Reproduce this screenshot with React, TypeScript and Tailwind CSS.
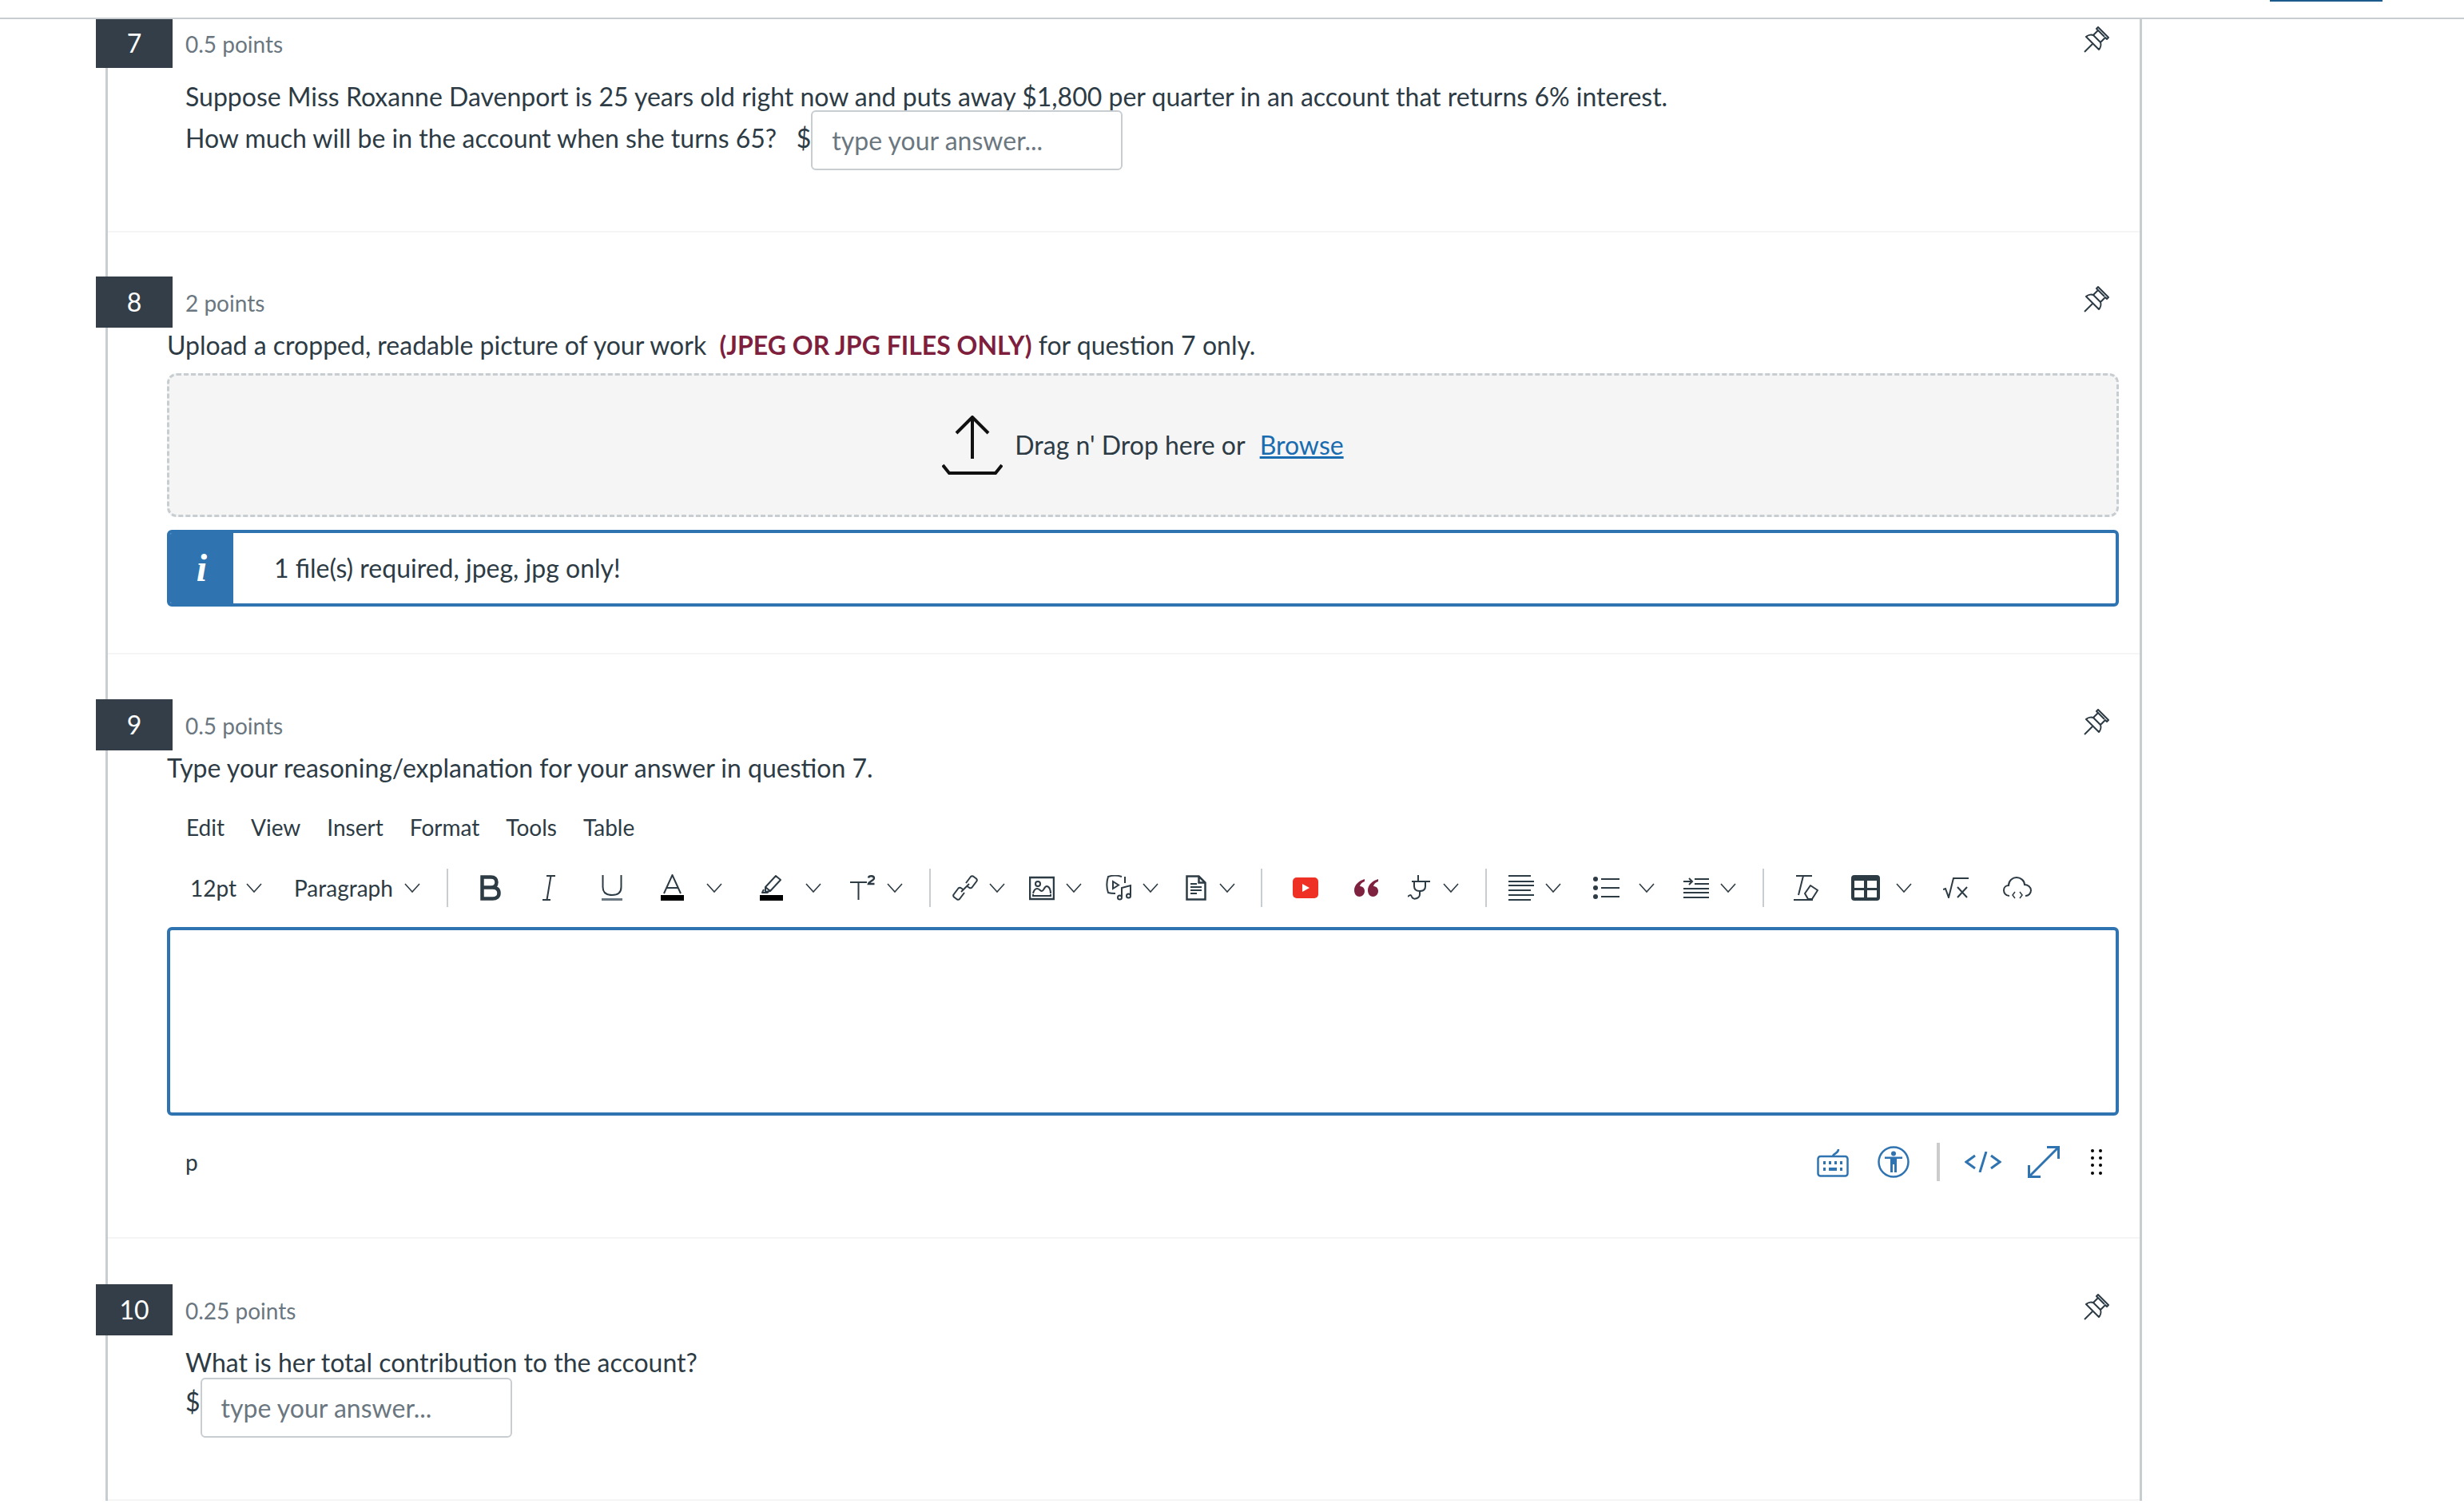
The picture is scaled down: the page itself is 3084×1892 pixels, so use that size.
const ink = "#2d3b45";
const blue = "#2f74b0";

function Chev({ className }: { className: string }) {
  return (
    <svg viewBox="0 0 20 12" className={`h-[12px] w-[20px] shrink-0 ${className}`} fill="none" stroke={ink} strokeWidth="1.6">
      <path d="M1 1l9 10 9-10" />
    </svg>
  );
}

function Sep({ className }: { className: string }) {
  return <div className={`h-[48px] w-[2px] shrink-0 bg-[#c7cdd1] ${className}`} />;
}

function Pin() {
  return (
    <svg viewBox="0 0 32 33" className="h-[33px] w-[32px]" fill="none" stroke={ink} strokeWidth="2" strokeLinejoin="round">
      <path d="M1 32l10-10" />
      <path d="M3 13c2-2 6-3 9-2l6-6-2-2 2-2 13 13-2 2-2-2-6 6c1 3 0 7-2 9z" />
      <path d="M12 11l9 9M18 5l8 8" />
    </svg>
  );
}

function QHead({ n, pts, clipped }: { n: string; pts: string; clipped?: boolean }) {
  return (
    <div className={clipped ? "flex h-[61px] items-start" : "flex h-[64px] items-start"}>
      <div className={clipped ? "-ml-[15px] flex h-[61px] w-[96px] shrink-0 items-center justify-center bg-[#333e48] pb-[2px] text-[32px] text-white" : "-ml-[15px] flex h-[64px] w-[96px] shrink-0 items-center justify-center bg-[#333e48] text-[32px] text-white"}>
        {n}
      </div>
      <div className={clipped ? "ml-[16px] flex h-[61px] items-center text-[28px] text-[#6b7780]" : "ml-[16px] flex h-[66px] items-center text-[28px] text-[#6b7780]"}>
        {pts}
      </div>
      <div className={clipped ? "ml-auto mr-[38px] mt-[9px]" : "ml-auto mr-[38px] mt-[12px]"}>
        <Pin />
      </div>
    </div>
  );
}

function Answer({ className }: { className: string }) {
  return (
    <div className={`flex h-[75px] w-[390px] shrink-0 items-center rounded-[6px] border-2 border-[#c7cdd1] bg-white pl-[24px] text-[32px] text-[#6b7780] ${className}`}>
      type your answer...
    </div>
  );
}

function Toolbar() {
  return (
    <div className="flex h-[99px] items-center text-[28px]">
      <span className="ml-[103px] w-[55px] shrink-0 whitespace-nowrap">12pt</span>
      <Chev className="ml-[15px]" />
      <span className="ml-[40px] w-[124px] shrink-0 whitespace-nowrap">Paragraph</span>
      <Chev className="ml-[14px]" />
      <Sep className="ml-[33px]" />

      <svg viewBox="0 0 26 32" className="ml-[40px] h-[32px] w-[26px] shrink-0" fill="none" stroke={ink} strokeWidth="4.5">
        <path d="M2.5 2.5h11c4.500 0 7 2.500 7 6.500s-2.500 6.500-7 6.500h-11zM2.500 15.500h13c5 0 8 2.500 8 7s-3 7-8 7h-13z" />
      </svg>
      <svg viewBox="0 0 16 32" className="ml-[52px] h-[32px] w-[16px] shrink-0" fill="none" stroke={ink} strokeWidth="2">
        <path d="M5 1h11M0 31h10M10.500 1L5.500 31" />
      </svg>
      <svg viewBox="0 0 26 32" className="ml-[58px] h-[32px] w-[26px] shrink-0" fill="none" stroke={ink} strokeWidth="2">
        <path d="M1.500 0v15c0 7 4 10 11.500 10s11.500-3 11.500-10V0" />
        <path d="M0 30.500h26" strokeWidth="3" stroke="#6b7780" />
      </svg>
      <svg viewBox="0 0 29 33" className="ml-[48px] h-[33px] w-[29px] shrink-0" fill="none" stroke={ink} strokeWidth="2">
        <path d="M4 24L14.500 1 25 24M7.500 17h14" />
        <rect x="0" y="26" width="29" height="7" fill="#000" stroke="none" />
      </svg>
      <Chev className="ml-[28px]" />
      <svg viewBox="0 0 29 33" className="ml-[47px] h-[33px] w-[29px] shrink-0" fill="none" stroke={ink} strokeWidth="2" strokeLinejoin="round">
        <path d="M7 16L20 2l6 5-13 14-6 1zM7 16l6 5M5 19l-2 4 6 0 2-1" />
        <rect x="0" y="26" width="29" height="7" fill="#000" stroke="none" />
      </svg>
      <Chev className="ml-[28px]" />
      <svg viewBox="0 0 32 32" className="ml-[36px] h-[32px] w-[32px] shrink-0" fill="none" stroke={ink} strokeWidth="2">
        <path d="M0 9h21M10.500 9v22" />
        <path d="M23 3.500c.5-3 7-3 7 .5 0 2.500-6 4-7 7h7.500" strokeWidth="2.400" />
      </svg>
      <Chev className="ml-[14px]" />
      <Sep className="ml-[33px]" />

      <svg viewBox="0 0 32 32" className="ml-[27px] h-[32px] w-[32px] shrink-0" fill="none" stroke={ink} strokeWidth="2" strokeLinejoin="round">
        <path d="M17 10l6-8c1-1 2-1 3-.5l4 3c1 1 1 2 .5 3l-6 8c-1 1-2 1-3 .5l-3-2" />
        <path d="M15 22l-6 8c-1 1-2 1-3 .5l-4-3c-1-1-1-2-.5-3l6-8c1-1 2-1 3-.5l3 2" />
        <path d="M11 21l10-10" />
      </svg>
      <Chev className="ml-[14px]" />
      <svg viewBox="0 0 32 32" className="ml-[30px] h-[32px] w-[32px] shrink-0" fill="none" stroke={ink} strokeWidth="2">
        <rect x="1" y="3" width="30" height="27" strokeWidth="2.500" />
        <circle cx="11" cy="11" r="3" />
        <path d="M5 23c1-4 3-6 5-6 3 0 4 3 6 3 2.500 0 3-6 6-6 4 0 5 6 5 9M5 24v2h22v-2" />
      </svg>
      <Chev className="ml-[14px]" />
      <svg viewBox="0 0 32 32" className="ml-[30px] h-[32px] w-[32px] shrink-0" fill="none" stroke={ink} strokeWidth="2">
        <path d="M20 2c-6-2-11-2-17 0-2 6-2 14 0 20 3 1 6 1 9 1M24 2v8" />
        <path d="M9 8v9l7-4.500z" />
        <path d="M20 27V16l11-3v12" />
        <circle cx="17.500" cy="28" r="2.500" />
        <circle cx="28.500" cy="26" r="2.500" />
      </svg>
      <Chev className="ml-[14px]" />
      <svg viewBox="0 0 26 32" className="ml-[34px] h-[32px] w-[26px] shrink-0" fill="none" stroke={ink} strokeWidth="2.500">
        <path d="M1.500 1.500h15l8 8v21h-23zM16.500 1.500v8h8" />
        <path d="M6 11h8M6 15h14M6 19h14M6 23h8" strokeWidth="2" />
      </svg>
      <Chev className="ml-[16px]" />
      <Sep className="ml-[32px]" />

      <svg viewBox="0 0 32 26" className="ml-[38px] h-[26px] w-[32px] shrink-0">
        <rect x="0" y="0" width="32" height="26" rx="5" fill="#ee3124" />
        <path d="M12 8l9 5-9 5z" fill="#fff" />
      </svg>
      <svg viewBox="0 0 32 24" className="ml-[44px] h-[24px] w-[32px] shrink-0" fill="#7e2240">
        <path d="M14 1C7 3 1 8 1 15c0 5 3 8 6.500 8S14 20 14 16s-3-6-6-6c.5-3 3-5 6-6zM31 1c-7 2-13 7-13 14 0 5 3 8 6.500 8s6.500-3 6.500-7-3-6-6-6c.5-3 3-5 6-6z" />
      </svg>
      <svg viewBox="0 0 28 32" className="ml-[36px] h-[32px] w-[28px] shrink-0" fill="none" stroke={ink} strokeWidth="2">
        <path d="M13 0v8M5 8h24M8 8v6c0 4 3 6 7 6s7-2 7-6V8M15 20v4c0 5-8 8-10 3-1-3-3-2-5 0" />
      </svg>
      <Chev className="ml-[16px]" />
      <Sep className="ml-[33px]" />

      <svg viewBox="0 0 32 32" className="ml-[27px] h-[32px] w-[32px] shrink-0" fill="none" stroke={ink} strokeWidth="2">
        <path d="M0 1h28M0 8h32M0 13h32M0 19h28M0 25h32M0 31h28" />
      </svg>
      <Chev className="ml-[14px]" />
      <svg viewBox="0 0 33 28" className="ml-[40px] h-[28px] w-[33px] shrink-0" fill="none" stroke={ink} strokeWidth="2">
        <circle cx="3" cy="3" r="3" fill={ink} stroke="none" />
        <circle cx="3" cy="14" r="3" fill={ink} stroke="none" />
        <circle cx="3" cy="25" r="3" fill={ink} stroke="none" />
        <path d="M10 3h23M10 14h23M10 25h23" />
      </svg>
      <Chev className="ml-[24px]" />
      <svg viewBox="0 0 32 28" className="ml-[36px] h-[28px] w-[32px] shrink-0" fill="none" stroke={ink} strokeWidth="2">
        <path d="M0 6h10M7 2l4 4-4 4M14 3h18M14 9h18M0 15h32M0 20h32M0 26h32" />
      </svg>
      <Chev className="ml-[14px]" />
      <Sep className="ml-[33px]" />

      <svg viewBox="0 0 32 32" className="ml-[37px] h-[32px] w-[32px] shrink-0" fill="none" stroke={ink} strokeWidth="2" strokeLinejoin="round">
        <path d="M3 1h20M12 1L6 25M0 31h24" />
        <path d="M14 23l7-10 9 6-7 11h-5z" />
      </svg>
      <svg viewBox="0 0 36 32" className="ml-[40px] h-[32px] w-[36px] shrink-0">
        <rect x="0" y="0" width="36" height="32" rx="4" fill={ink} />
        <rect x="4" y="7" width="12" height="9" fill="#fff" />
        <rect x="20" y="7" width="12" height="9" fill="#fff" />
        <rect x="4" y="19" width="12" height="9" fill="#fff" />
        <rect x="20" y="19" width="12" height="9" fill="#fff" />
      </svg>
      <Chev className="ml-[20px]" />
      <svg viewBox="0 0 33 26" className="ml-[39px] h-[26px] w-[33px] shrink-0" fill="none" stroke={ink} strokeWidth="2">
        <path d="M0 15l3-1 4 11L13 1h19M18 12l12 13M30 12L18 25" />
      </svg>
      <svg viewBox="0 0 36 28" className="ml-[42px] h-[28px] w-[36px] shrink-0" fill="none" stroke={ink} strokeWidth="2">
        <path d="M8 24C3 24 1 20 1 17c0-4 3-6 6-6 0-6 5-10 10-10s10 4 10 9c4 0 8 3 8 7s-3 7-7 7" />
        <path d="M15 19l-3 4 3 4M21 19l3 4-3 4" strokeWidth="1.500" />
      </svg>
      <Chev className="hidden" />
    </div>
  );
}

function StatusBar() {
  return (
    <div className="flex h-[116px] items-center text-[28px]">
      <span className="ml-[97px]">p</span>
      <svg viewBox="0 0 40 37" className="ml-auto h-[37px] w-[40px] shrink-0" fill="none" stroke={blue} strokeWidth="2.500">
        <path d="M20 11c0-4 7-3 7-9" />
        <rect x="1.500" y="11" width="37" height="24.500" rx="3" />
        <path d="M8 19h3M15 19h3M22 19h3M29 19h3M8 27h3M15 27h10M29 27h3" strokeWidth="4" />
      </svg>
      <svg viewBox="0 0 40 40" className="ml-[36px] h-[40px] w-[40px] shrink-0" fill={blue}>
        <circle cx="20" cy="20" r="18.500" fill="none" stroke={blue} strokeWidth="2.500" />
        <circle cx="20" cy="9.500" r="3" />
        <path d="M9 13.500h22v2.500h-7v17h-3v-10h-2v10h-3V16H9z" />
      </svg>
      <div className="ml-[34px] h-[48px] w-[4px] shrink-0 bg-[#cccccc]" />
      <svg viewBox="0 0 46 26" className="ml-[31px] h-[26px] w-[46px] shrink-0" fill="none" stroke={blue} strokeWidth="3">
        <path d="M13 5L2 13l11 8M33 5l11 8-11 8M27 0l-8 26" />
      </svg>
      <svg viewBox="0 0 40 40" className="ml-[33px] h-[40px] w-[40px] shrink-0" fill="none" stroke={blue} strokeWidth="3">
        <path d="M2 38L38 2M24 1.500h14.500V16M1.500 24v14.500H16" />
      </svg>
      <svg viewBox="0 0 14 32" className="ml-[39px] mr-[47px] h-[32px] w-[14px] shrink-0" fill="#000">
        <circle cx="2" cy="2" r="2" /><circle cx="12" cy="2" r="2" />
        <circle cx="2" cy="11" r="2" /><circle cx="12" cy="11" r="2" />
        <circle cx="2" cy="20" r="2" /><circle cx="12" cy="20" r="2" />
        <circle cx="2" cy="30" r="2" /><circle cx="12" cy="30" r="2" />
      </svg>
    </div>
  );
}

export default function App() {
  return (
    <div className="h-[1892px] w-[3084px] overflow-hidden bg-white font-['Lato','Liberation_Sans',sans-serif] text-[#2d3b45]">
      <div className="h-[24px] border-b-2 border-[#c7cdd1]">
        <div className="ml-[2841px] h-[2px] w-[141px] bg-[#1c5a8c]" />
      </div>
      <main className="ml-[132px] w-[2549px] border-x-[3px] border-[#c7cdd1]">
        <section className="border-b-2 border-[#f5f5f5] pb-[76px]">
          <QHead n="7" pts="0.5 points" clipped />
          <div className="ml-[97px] text-[32px]">
            <div className="h-[53px] whitespace-nowrap pt-[9px] leading-[53px]">
              Suppose Miss Roxanne Davenport is 25 years old right now and puts away $1,800 per quarter in an account that returns 6% interest.
            </div>
            <div className="flex items-start">
              <span className="whitespace-pre leading-[70px]">How much will be in the account when she turns 65?   $</span>
              <Answer className="ml-0" />
            </div>
          </div>
        </section>

        <section className="border-b-2 border-[#f5f5f5] pb-[58px] pt-[55px]">
          <QHead n="8" pts="2 points" />
          <div className="ml-[74px] mr-[26px]">
            <div className="h-[44px] whitespace-pre text-[32px] leading-[44px]">
              Upload a cropped, readable picture of your work  <b className="font-bold text-[#7e1f3d]">(JPEG OR JPG FILES ONLY)</b> for question 7 only.
            </div>
            <div className="mt-[13px] flex h-[180px] items-center justify-center rounded-[12px] border-[3px] border-dashed border-[#c7cdd1] bg-[#f5f5f5] text-[32px]">
              <svg viewBox="0 0 76 74" className="h-[74px] w-[76px]" fill="none" stroke="#111" strokeWidth="4">
                <path d="M38 2v52M18 22L38 2l20 20" />
                <path d="M1 62l8 10h58l8-10" />
              </svg>
              <span className="ml-[15px] whitespace-nowrap">Drag n' Drop here or</span>
              <span className="ml-[18px] text-[#1a6cb0] underline">Browse</span>
            </div>
            <div className="mt-[16px] flex h-[96px] overflow-hidden rounded-[6px] border-4 border-[#2f74b0]">
              <div className="flex w-[79px] shrink-0 items-center justify-center bg-[#2f74b0] font-['Liberation_Serif',serif] text-[48px] font-bold italic text-white">
                i
              </div>
              <div className="flex items-center pl-[51px] text-[32px]">1 file(s) required, jpeg, jpg only!</div>
            </div>
          </div>
        </section>

        <section className="border-b-2 border-[#f5f5f5] pb-[36px] pt-[56px]">
          <QHead n="9" pts="0.5 points" />
          <div className="ml-[74px] mr-[26px] h-[44px] text-[32px] leading-[44px]">
            Type your reasoning/explanation for your answer in question 7.
          </div>
          <div className="ml-[98px] mt-[26px] flex h-[52px] items-center gap-[33px] text-[28px]">
            <span>Edit</span>
            <span>View</span>
            <span>Insert</span>
            <span>Format</span>
            <span>Tools</span>
            <span>Table</span>
          </div>
          <Toolbar />
          <div className="ml-[74px] mr-[26px] h-[236px] rounded-[6px] border-4 border-[#2f74b0]" />
          <StatusBar />
        </section>

        <section className="border-b-2 border-[#f5f5f5] pb-[77px] pt-[57px]">
          <QHead n="10" pts="0.25 points" />
          <div className="ml-[97px] text-[32px]">
            <div className="h-[53px] leading-[68px]">What is her total contribution to the account?</div>
            <div className="flex items-start">
              <span className="leading-[60px]">$</span>
              <Answer className="ml-0" />
            </div>
          </div>
        </section>
      </main>
    </div>
  );
}
